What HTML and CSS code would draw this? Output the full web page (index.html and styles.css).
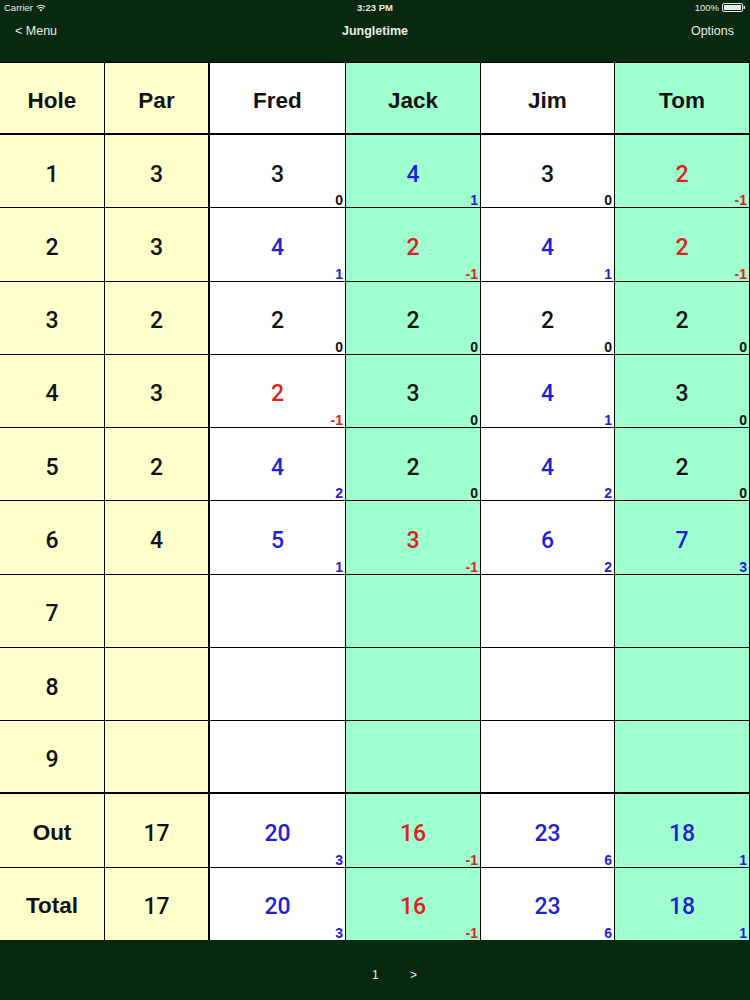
FILE: index.html
```html
<!DOCTYPE html>
<html>
<head>
<meta charset="utf-8">
<link rel="stylesheet" href="styles.css">
</head>
<body>
<div class="status">
  <div class="st-left">Carrier
    <svg class="wifi" width="10" height="8" viewBox="0 0 10 8"><path d="M5 7.6 L3.6 6 A2 2 0 0 1 6.4 6 Z" fill="#e8ece8"/><path d="M2.3 4.6 A3.8 3.8 0 0 1 7.7 4.6" stroke="#e8ece8" stroke-width="1.1" fill="none"/><path d="M0.8 3 A6 6 0 0 1 9.2 3" stroke="#e8ece8" stroke-width="1.1" fill="none"/></svg>
  </div>
  <div class="st-mid">3:23 PM</div>
  <div class="st-right">100%
    <svg class="batt" width="24" height="9" viewBox="0 0 24 9"><rect x="0.5" y="0.5" width="20" height="8" rx="1.5" fill="none" stroke="#e8ece8"/><rect x="2" y="2" width="17" height="5" fill="#e8ece8"/><rect x="21.5" y="3" width="1.5" height="3" fill="#e8ece8"/></svg>
  </div>
</div>
<div class="nav">
  <div class="nav-left">&lt; Menu</div>
  <div class="nav-title">Jungletime</div>
  <div class="nav-right">Options</div>
</div>
<div class="grid">
  <div class="c y hd"><span class="l">Hole</span></div><div class="c y p hd"><span class="l">Par</span></div><div class="c w hd"><span class="l">Fred</span></div><div class="c g hd"><span class="l">Jack</span></div><div class="c w hd"><span class="l">Jim</span></div><div class="c g hd"><span class="l">Tom</span></div>

  <div class="c y"><span class="s">1</span></div><div class="c y p"><span class="s">3</span></div>
  <div class="c w"><span class="s">3</span><span class="d">0</span></div>
  <div class="c g"><span class="s b">4</span><span class="d b">1</span></div>
  <div class="c w"><span class="s">3</span><span class="d">0</span></div>
  <div class="c g"><span class="s r">2</span><span class="d r">-1</span></div>

  <div class="c y"><span class="s">2</span></div><div class="c y p"><span class="s">3</span></div>
  <div class="c w"><span class="s b">4</span><span class="d b">1</span></div>
  <div class="c g"><span class="s r">2</span><span class="d r">-1</span></div>
  <div class="c w"><span class="s b">4</span><span class="d b">1</span></div>
  <div class="c g"><span class="s r">2</span><span class="d r">-1</span></div>

  <div class="c y"><span class="s">3</span></div><div class="c y p"><span class="s">2</span></div>
  <div class="c w"><span class="s">2</span><span class="d">0</span></div>
  <div class="c g"><span class="s">2</span><span class="d">0</span></div>
  <div class="c w"><span class="s">2</span><span class="d">0</span></div>
  <div class="c g"><span class="s">2</span><span class="d">0</span></div>

  <div class="c y"><span class="s">4</span></div><div class="c y p"><span class="s">3</span></div>
  <div class="c w"><span class="s r">2</span><span class="d r">-1</span></div>
  <div class="c g"><span class="s">3</span><span class="d">0</span></div>
  <div class="c w"><span class="s b">4</span><span class="d b">1</span></div>
  <div class="c g"><span class="s">3</span><span class="d">0</span></div>

  <div class="c y"><span class="s">5</span></div><div class="c y p"><span class="s">2</span></div>
  <div class="c w"><span class="s b">4</span><span class="d b">2</span></div>
  <div class="c g"><span class="s">2</span><span class="d">0</span></div>
  <div class="c w"><span class="s b">4</span><span class="d b">2</span></div>
  <div class="c g"><span class="s">2</span><span class="d">0</span></div>

  <div class="c y"><span class="s">6</span></div><div class="c y p"><span class="s">4</span></div>
  <div class="c w"><span class="s b">5</span><span class="d b">1</span></div>
  <div class="c g"><span class="s r">3</span><span class="d r">-1</span></div>
  <div class="c w"><span class="s b">6</span><span class="d b">2</span></div>
  <div class="c g"><span class="s b">7</span><span class="d b">3</span></div>

  <div class="c y"><span class="s">7</span></div><div class="c y p"></div><div class="c w"></div><div class="c g"></div><div class="c w"></div><div class="c g"></div>
  <div class="c y"><span class="s">8</span></div><div class="c y p"></div><div class="c w"></div><div class="c g"></div><div class="c w"></div><div class="c g"></div>
  <div class="c y last9"><span class="s">9</span></div><div class="c y p last9"></div><div class="c w last9"></div><div class="c g last9"></div><div class="c w last9"></div><div class="c g last9"></div>

  <div class="c y"><span class="l">Out</span></div><div class="c y p"><span class="s">17</span></div>
  <div class="c w"><span class="s b">20</span><span class="d b">3</span></div>
  <div class="c g"><span class="s r">16</span><span class="d r">-1</span></div>
  <div class="c w"><span class="s b">23</span><span class="d b">6</span></div>
  <div class="c g"><span class="s b">18</span><span class="d b">1</span></div>

  <div class="c y"><span class="l">Total</span></div><div class="c y p"><span class="s">17</span></div>
  <div class="c w"><span class="s b">20</span><span class="d b">3</span></div>
  <div class="c g"><span class="s r">16</span><span class="d r">-1</span></div>
  <div class="c w"><span class="s b">23</span><span class="d b">6</span></div>
  <div class="c g"><span class="s b">18</span><span class="d b">1</span></div>
</div>
<div class="bottom">
  <span class="page">1</span>
  <span class="next">&gt;</span>
</div>
</body>
</html>
```

FILE: styles.css
```css
html, body {
  margin: 0;
  padding: 0;
}
body {
  width: 750px;
  height: 1000px;
  background: #08290f;
  font-family: "Liberation Sans", Arial, sans-serif;
  color: #e8ece8;
  overflow: hidden;
}
.status {
  height: 20px;
  display: flex;
  align-items: flex-start;
  justify-content: space-between;
  padding: 2px 4px 0 4px;
  box-sizing: border-box;
  font-size: 9.5px;
  position: relative;
}
.st-left, .st-right {
  display: flex;
  align-items: center;
  gap: 3px;
}
.st-mid {
  position: absolute;
  left: 0;
  right: 0;
  top: 2px;
  text-align: center;
  font-weight: 700;
}
.nav {
  height: 42px;
  display: flex;
  align-items: flex-start;
  justify-content: space-between;
  padding: 4px 16px 0 15px;
  box-sizing: border-box;
  font-size: 12.5px;
  position: relative;
}
.nav-title {
  position: absolute;
  left: 0;
  right: 0;
  top: 4px;
  text-align: center;
  font-weight: 700;
}
.grid {
  height: 878px;
  box-sizing: border-box;
  border-top: 1px solid #000;
  background: #000;
  display: grid;
  grid-template-columns: 104px 104px 135px 134px 133px 134px;
  grid-template-rows: 71px repeat(11, 1fr);
  gap: 1px;
}
.c {
  position: relative;
  display: flex;
  align-items: center;
  justify-content: center;
  color: #111;
  box-sizing: border-box;
}
.y { background: #ffffcc; }
.w { background: #ffffff; }
.g { background: #9fffcf; }
.p { border-right: 1px solid #000; }
.hd { border-bottom: 1px solid #000; }
.last9 { border-bottom: 1px solid #000; }
.l {
  font-family: "Liberation Sans", Arial, sans-serif;
  font-weight: 700;
  font-size: 22.5px;
  padding-top: 5px;
}
.s {
  font-family: Roboto, "Liberation Sans", sans-serif;
  font-weight: 500;
  font-size: 23px;
  padding-top: 6px;
}
.d {
  position: absolute;
  right: 2px;
  bottom: -1px;
  font-family: "Liberation Sans", Arial, sans-serif;
  font-weight: 700;
  font-size: 14px;
  color: #111;
}
.b { color: #1f1fd6; }
.r { color: #e02020; }
.bottom {
  height: 60px;
  position: relative;
  font-size: 12px;
  color: #e8ece8;
}
.page {
  position: absolute;
  left: 372px;
  top: 28px;
}
.next {
  position: absolute;
  left: 410px;
  top: 28px;
}
```
